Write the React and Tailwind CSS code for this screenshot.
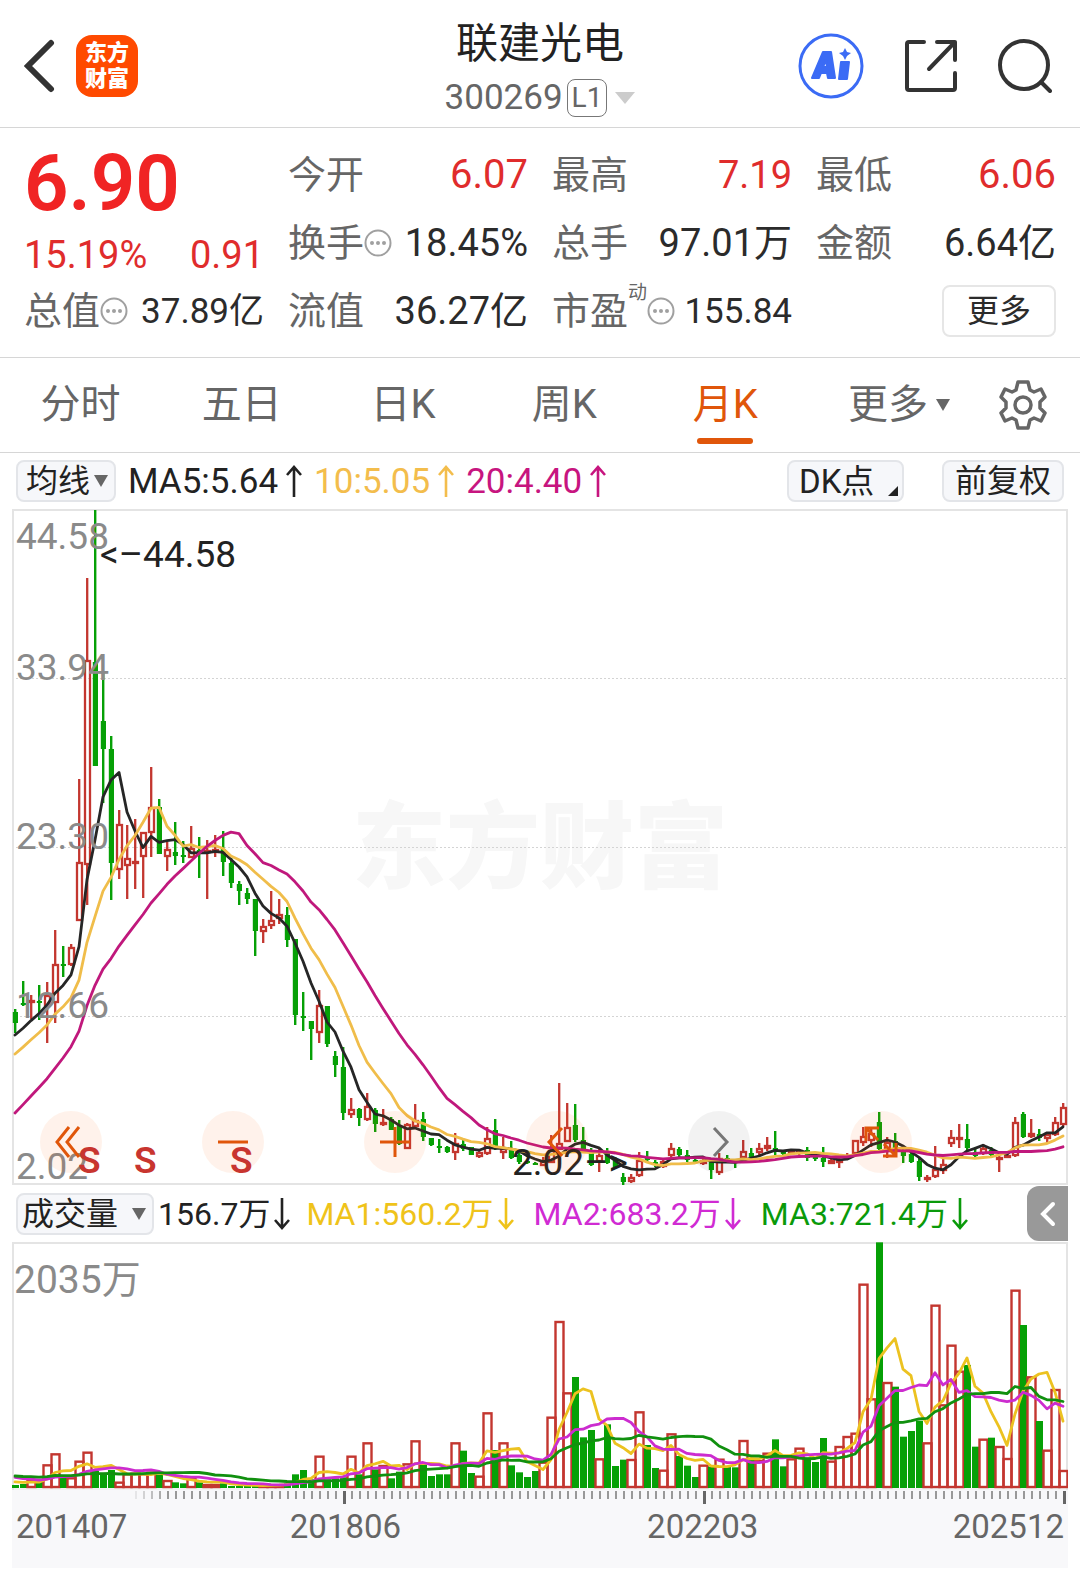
import { useState } from "react";

// one row per month: [direction, high, body top, body bottom, low], all in chart y units
const candles = [
  ["d", 1009, 1012, 1023, 1033], ["d", 981, 1003, 1004, 1006], ["u", 995, 1000, 1003, 1019], ["d", 985, 1001, 1003, 1020],
  ["u", 982, 995, 1006, 1043], ["u", 930, 964, 1003, 1023], ["d", 946, 964, 965, 977], ["u", 944, 947, 965, 966],
  ["u", 779, 862, 921, 921], ["u", 578, 660, 865, 905], ["d", 510, 662, 766, 766], ["d", 672, 721, 749, 803],
  ["d", 736, 749, 863, 900], ["u", 810, 824, 870, 879], ["u", 825, 858, 866, 899], ["u", 819, 861, 863, 889],
  ["u", 832, 832, 857, 898], ["u", 767, 807, 833, 857], ["d", 799, 807, 854, 854], ["u", 842, 849, 857, 871],
  ["d", 822, 852, 856, 865], ["d", 841, 855, 857, 863], ["u", 826, 848, 858, 858], ["d", 837, 850, 853, 878],
  ["u", 840, 850, 853, 899], ["u", 835, 849, 853, 857], ["d", 831, 849, 862, 876], ["d", 858, 863, 883, 888],
  ["d", 881, 884, 891, 905], ["d", 888, 893, 899, 904], ["d", 899, 899, 931, 956], ["u", 919, 926, 932, 943],
  ["u", 891, 920, 926, 929], ["u", 899, 914, 919, 924], ["d", 907, 915, 940, 947], ["d", 939, 939, 1015, 1025],
  ["d", 992, 1016, 1017, 1031], ["d", 1021, 1021, 1029, 1060], ["u", 990, 1005, 1033, 1043], ["d", 1006, 1006, 1044, 1047],
  ["d", 1051, 1056, 1065, 1077], ["d", 1047, 1067, 1113, 1120], ["u", 1098, 1109, 1115, 1118], ["d", 1108, 1109, 1118, 1126],
  ["u", 1093, 1106, 1120, 1121], ["d", 1108, 1110, 1124, 1132], ["u", 1109, 1122, 1125, 1126], ["d", 1117, 1119, 1130, 1130],
  ["d", 1120, 1125, 1144, 1145], ["u", 1123, 1124, 1149, 1149], ["u", 1104, 1120, 1127, 1128], ["d", 1112, 1119, 1137, 1141],
  ["d", 1138, 1138, 1145, 1146], ["d", 1139, 1146, 1147, 1153], ["d", 1146, 1147, 1152, 1153], ["u", 1133, 1143, 1153, 1160],
  ["d", 1140, 1144, 1149, 1151], ["d", 1147, 1147, 1155, 1155], ["u", 1150, 1152, 1157, 1158], ["u", 1127, 1138, 1154, 1155],
  ["d", 1119, 1130, 1148, 1150], ["u", 1137, 1148, 1153, 1159], ["d", 1141, 1150, 1158, 1159], ["d", 1153, 1155, 1162, 1164],
  ["d", 1160, 1161, 1163, 1164], ["d", 1162, 1163, 1164, 1165], ["u", 1157, 1161, 1166, 1166], ["u", 1135, 1150, 1163, 1163],
  ["u", 1083, 1143, 1150, 1150], ["u", 1103, 1127, 1142, 1142], ["d", 1104, 1125, 1140, 1142], ["d", 1127, 1140, 1152, 1153],
  ["d", 1148, 1152, 1165, 1166], ["u", 1148, 1155, 1162, 1172], ["d", 1148, 1153, 1163, 1164], ["d", 1157, 1160, 1167, 1168],
  ["d", 1173, 1177, 1182, 1185], ["u", 1174, 1177, 1182, 1183], ["u", 1152, 1160, 1176, 1177], ["d", 1151, 1158, 1160, 1163],
  ["d", 1160, 1162, 1165, 1167], ["u", 1159, 1161, 1167, 1168], ["u", 1143, 1148, 1156, 1158], ["d", 1147, 1149, 1155, 1157],
  ["d", 1150, 1155, 1160, 1162], ["d", 1158, 1160, 1162, 1163], ["u", 1157, 1160, 1164, 1165], ["d", 1158, 1161, 1170, 1179],
  ["u", 1153, 1158, 1173, 1175], ["d", 1155, 1158, 1161, 1163], ["d", 1159, 1160, 1163, 1168], ["u", 1140, 1151, 1158, 1160],
  ["d", 1148, 1153, 1157, 1158], ["u", 1143, 1148, 1153, 1156], ["u", 1137, 1145, 1149, 1151], ["d", 1131, 1148, 1151, 1155],
  ["d", 1150, 1151, 1154, 1155], ["u", 1150, 1151, 1154, 1155], ["u", 1149, 1150, 1154, 1155], ["d", 1147, 1150, 1158, 1161],
  ["d", 1153, 1155, 1159, 1161], ["d", 1147, 1158, 1162, 1167], ["u", 1159, 1160, 1164, 1164], ["u", 1158, 1160, 1162, 1168],
  ["u", 1153, 1155, 1158, 1159], ["u", 1140, 1140, 1154, 1155], ["u", 1127, 1136, 1143, 1146], ["u", 1127, 1133, 1141, 1147],
  ["d", 1112, 1122, 1149, 1150], ["u", 1137, 1142, 1151, 1158], ["d", 1133, 1141, 1150, 1155], ["d", 1147, 1152, 1156, 1163],
  ["d", 1150, 1154, 1162, 1163], ["d", 1157, 1161, 1177, 1181], ["u", 1175, 1177, 1178, 1182], ["u", 1146, 1169, 1177, 1178],
  ["u", 1157, 1164, 1171, 1174], ["u", 1130, 1137, 1144, 1147], ["u", 1124, 1137, 1139, 1148], ["d", 1124, 1139, 1148, 1150],
  ["d", 1147, 1152, 1156, 1159], ["u", 1144, 1148, 1154, 1155], ["d", 1147, 1150, 1155, 1158], ["u", 1156, 1157, 1158, 1172],
  ["u", 1154, 1155, 1158, 1158], ["u", 1117, 1122, 1156, 1157], ["d", 1112, 1114, 1137, 1138], ["u", 1119, 1133, 1137, 1138],
  ["d", 1129, 1134, 1138, 1141], ["u", 1132, 1134, 1139, 1144], ["u", 1117, 1122, 1135, 1136], ["u", 1103, 1107, 1125, 1126],
];

// 737 = 2035万
const volumes = [
  9, 12, 26, 19, 71, 104, 36, 32, 82, 109, 52, 44, 54, 19, 44, 46, 44, 49, 39, 24,
  17, 14, 32, 17, 12, 12, 14, 6, 6, 6, 9, 9, 9, 9, 14, 41, 54, 26, 97, 26,
  29, 32, 97, 41, 137, 56, 69, 29, 49, 74, 143, 69, 36, 41, 41, 137, 112, 45, 37, 227,
  114, 137, 68, 47, 33, 51, 79, 214, 501, 287, 333, 152, 174, 89, 191, 66, 85, 87, 230, 129,
  60, 55, 164, 96, 67, 33, 70, 64, 88, 64, 62, 144, 84, 84, 106, 146, 65, 89, 121, 92,
  78, 150, 82, 126, 156, 166, 613, 269, 737, 318, 304, 154, 171, 202, 137, 550, 251, 430, 352, 369,
  124, 148, 151, 126, 90, 595, 489, 335, 201, 115, 297, 54,
];

// months before the visible window, only needed for the averages
const history = (a, b, c) => [...Array(10).fill(a), ...Array(5).fill(b), ...Array(4).fill(c)];
const closes = [...history(1172, 1073, 1038), ...candles.map(([dir, , top, bottom]) => (dir === "u" ? top : bottom))];
const volumeSeries = [...history(40, 45, 21), ...volumes];

const RED = "#c3362f";
const GREEN = "#06a006";
const xOf = (i) => 15 + i * 8;

const average = (series, n) =>
  candles.map((_, i) => {
    const end = i + 20;
    return series.slice(end - n, end).reduce((a, b) => a + b, 0) / n;
  });

const toPoints = (ys) => ys.map((y, i) => `${xOf(i)},${y.toFixed(1)}`).join(" ");
const priceLine = (n) => toPoints(average(closes, n));
const volumeLine = (n) => toPoints(average(volumeSeries, n).map((v) => 1488 - v / 3));

const Caret = ({ className }) => (
  <svg viewBox="0 0 14 12" preserveAspectRatio="none" className={className} fill="currentColor" aria-hidden="true">
    <path d="M0 0h14L7 12z" />
  </svg>
);

const Arrow = ({ down }) => (
  <svg viewBox="0 0 16 32" className="h-8 w-4 shrink-0" fill="none" stroke="currentColor" strokeWidth="2.6" aria-hidden="true">
    {down ? <path d="M8 0v30M1 22l7 8 7-8" /> : <path d="M8 32V2M1 10l7-8 7 8" />}
  </svg>
);

const InfoDot = ({ label }) => (
  <button aria-label={label} className="shrink-0 text-[#a0a0a0]">
    <svg viewBox="0 0 28 28" className="block size-7" fill="none" stroke="currentColor" strokeWidth="2">
      <circle cx="14" cy="14" r="12.5" />
      <g fill="currentColor" stroke="none">
        <circle cx="8" cy="14" r="2" />
        <circle cx="14" cy="14" r="2" />
        <circle cx="20" cy="14" r="2" />
      </g>
    </svg>
  </button>
);

const Header = () => (
  <header className="grid h-32 grid-cols-[1fr_auto_1fr] items-center border-b border-[#d6d6d6] px-6 pt-1">
    <div className="flex items-center gap-5">
      <button aria-label="返回" className="text-[#333]">
        <svg viewBox="0 0 32 54" className="h-[54px] w-8" fill="none" stroke="currentColor" strokeWidth="6" strokeLinecap="round">
          <path d="M27 4L4 27l23 23" />
        </svg>
      </button>
      <div className="flex size-[62px] flex-col items-center justify-center rounded-2xl bg-[#ff4a00] text-[22px] leading-[26px] font-black text-white">
        <span>东方</span>
        <span>财富</span>
      </div>
    </div>

    <div className="flex flex-col items-center gap-1 pt-2">
      <h1 className="text-[42px] leading-[52px] text-[#222]">联建光电</h1>
      <button className="flex items-center gap-1 text-[35px] leading-[48px] text-[#666]">
        300269
        <span className="rounded-lg border border-[#777] px-1 text-[28px] leading-9">L1</span>
        <Caret className="ml-1 h-3 w-5 text-[#ccc]" />
      </button>
    </div>

    <div className="flex items-center justify-end gap-10 pr-1 text-[#333]">
      <button aria-label="Ai" className="text-[#3b6bf5]">
        <svg viewBox="0 0 66 66" className="size-[66px]">
          <circle cx="33" cy="33" r="31" fill="none" stroke="currentColor" strokeWidth="3" />
          <g fill="currentColor" stroke="currentColor" strokeWidth="2" strokeLinejoin="round">
            <path fillRule="evenodd" d="M14 45L25 19h8l4 26h-7l-1-5h-6l-2 5zM25 34h4l-1-7z" />
            <path d="M43 29h8l-2 17h-8z" />
            <path strokeWidth="0" d="M47 15l2 4 4 1-4 3-2 4-2-4-4-3 4-1z" />
          </g>
        </svg>
      </button>
      <button aria-label="分享">
        <svg viewBox="0 0 54 54" className="size-[54px]" fill="none" stroke="currentColor" strokeWidth="4" strokeLinecap="round" strokeLinejoin="round">
          <path d="M20 3H5q-2 0-2 2v44q0 2 2 2h44q2 0 2-2V34M33 3h18v18M51 3L25 30" />
        </svg>
      </button>
      <button aria-label="搜索">
        <svg viewBox="0 0 54 54" className="size-[54px]" fill="none" stroke="currentColor" strokeWidth="4" strokeLinecap="round">
          <circle cx="26" cy="26" r="24" />
          <path d="M43 43l9 9" />
        </svg>
      </button>
    </div>
  </header>
);

const Stat = ({ label, value, info, sup, color = "text-[#2b2b2b]", size = "text-[38px]" }) => (
  <div className="flex h-[68px] items-center">
    <dt className="flex shrink-0 items-center text-[38px] text-[#666]">
      {label}
      {sup && <span className="mb-9 text-[19px] leading-5">{sup}</span>}
      {info && <InfoDot label={`${label}说明`} />}
    </dt>
    <dd className={`flex-1 text-right whitespace-nowrap ${size} ${color}`}>{value}</dd>
  </div>
);

const Quote = () => (
  <section className="grid grid-cols-4 gap-x-6 border-b border-[#d6d6d6] px-6 pt-[13px] pb-3 leading-none">
    <div>
      <div className="flex h-[136px] flex-col justify-between pt-1">
        <div className="text-[78px] leading-[78px] font-semibold text-[#f02424]">6.90</div>
        <div className="flex items-center justify-between text-[38px] leading-[44px] text-[#e02c2c]">
          <span>15.19%</span>
          <span>0.91</span>
        </div>
      </div>
      <dl>
        <Stat label="总值" value="37.89亿" info size="text-[35px]" />
      </dl>
    </div>
    <dl>
      <Stat label="今开" value="6.07" color="text-[#e02c2c]" size="text-[40px]" />
      <Stat label="换手" value="18.45%" info />
      <Stat label="流值" value="36.27亿" />
    </dl>
    <dl>
      <Stat label="最高" value="7.19" color="text-[#e02c2c]" />
      <Stat label="总手" value="97.01万" />
      <Stat label="市盈" value="155.84" sup="动" info size="text-[35px]" />
    </dl>
    <div>
      <dl>
        <Stat label="最低" value="6.06" color="text-[#e02c2c]" size="text-[40px]" />
        <Stat label="金额" value="6.64亿" />
      </dl>
      <div className="flex h-[68px] items-center justify-end">
        <button className="h-[52px] w-[114px] rounded-lg border-2 border-[#e6e6e6] text-[32px] text-[#2b2b2b]">更多</button>
      </div>
    </div>
  </section>
);

const Tabs = () => {
  const [active, setActive] = useState("月K");
  return (
    <nav className="flex h-[95px] border-b border-[#d6d6d6] pr-[26px] text-[40px] text-[#666]">
      {["分时", "五日", "日K", "周K", "月K"].map((tab) => (
        <button
          key={tab}
          onClick={() => setActive(tab)}
          className={`relative flex-1 ${tab === active ? "text-[#e0560a]" : ""}`}
        >
          {tab}
          {tab === active && <span className="absolute bottom-2 left-1/2 h-[6px] w-14 -translate-x-1/2 rounded-full bg-[#e0560a]" />}
        </button>
      ))}
      <button className="flex w-[186px] items-center justify-center gap-2">
        更多
        <Caret className="h-3 w-[14px]" />
      </button>
      <button aria-label="设置" className="flex w-[62px] items-center justify-center">
        <svg viewBox="0 0 48 50" className="h-[50px] w-12" fill="none" stroke="currentColor" strokeWidth="3.5" strokeLinejoin="round">
          <path d="M19 2h10l2 8 4 2 7-3 4 8-5 5v6l5 5-4 8-7-3-4 2-2 8H19l-2-8-4-2-7 3-4-8 5-5v-6l-5-5 4-8 7 3 4-2z" />
          <circle cx="24" cy="25" r="8" />
        </svg>
      </button>
    </nav>
  );
};

const Picker = ({ label, options, className }) => (
  <div className="relative flex items-center text-[#222]">
    <select
      aria-label={label}
      className={`h-[42px] appearance-none rounded-lg border-2 border-[#e3e5e9] bg-[#f6f7fa] text-[32px] leading-[38px] ${className}`}
    >
      {options.map((o) => (
        <option key={o}>{o}</option>
      ))}
    </select>
    <Caret className="pointer-events-none absolute right-2 h-3 w-[14px] text-[#666]" />
  </div>
);

const PriceBar = () => (
  <div className="flex h-14 items-center gap-2 px-4 text-[35px] leading-none">
    <Picker label="主图指标" options={["均线", "BOLL"]} className="w-[100px] pl-2" />
    <span className="ml-1 flex items-center gap-2 text-[#222]">MA5:5.64<Arrow /></span>
    <span className="ml-1 flex items-center gap-2 text-[#f3bd4c]">10:5.05<Arrow /></span>
    <span className="ml-1 flex items-center gap-2 text-[#c7157f]">20:4.40<Arrow /></span>
    <button className="ml-auto flex h-[42px] w-[117px] items-center justify-between rounded-lg border-2 border-[#e3e5e9] bg-[#f6f7fa] pr-1 pl-2.5 text-[33px] text-[#222]">
      DK点
      <svg viewBox="0 0 10 10" className="mt-5 size-[10px]" fill="currentColor" aria-hidden="true">
        <path d="M10 0v10H0z" />
      </svg>
    </button>
    <button className="ml-[30px] h-[42px] w-[122px] rounded-lg border-2 border-[#e3e5e9] bg-[#f6f7fa] text-[32px] text-[#222]">前复权</button>
  </div>
);

const tools = [
  { label: "最早", d: "M29 16L17 31l12 15M39 16L27 31l12 15" },
  { label: "缩小", d: "M16 31h30" },
  { label: "放大", d: "M16 31h30M31 16v30" },
  { label: "向前", d: "M36 17L23 31l13 14" },
  { label: "向后", d: "M26 17l13 14-13 14", muted: true },
  { label: "全屏", d: "M16 30V17h13M17 18l11 11M46 32v13H33M45 44L34 33" },
];

const PriceChart = () => (
  <div className="relative mx-3 text-[37px] leading-[44px]">
    <div className="absolute inset-0 flex items-center justify-center pt-1 text-[94px] font-black text-[#f7f7f7]" aria-hidden="true">东方财富</div>
    <svg viewBox="12 509 1056 676" className="relative block w-full" fill="none">
      <g stroke="#d4d4d4" strokeDasharray="2 2">
        <path d="M12 678.5h1056M12 847.5h1056M12 1016.5h1056" />
      </g>
      <rect x="13" y="510" width="1054" height="674" stroke="#e4e4e4" strokeWidth="2" />
      {candles.map(([dir, high, top, bottom, low], i) => {
        const x = xOf(i);
        if (dir === "d") {
          return (
            <g key={i} fill={GREEN}>
              <rect x={x - 1} y={high} width="2.4" height={low - high} />
              <rect x={x - 2.2} y={top} width="5.2" height={Math.max(bottom - top, 2)} />
            </g>
          );
        }
        return (
          <g key={i} stroke={RED} strokeWidth="2.3">
            <path d={`M${x + 0.2} ${high}V${top}M${x + 0.2} ${bottom}V${low}`} />
            <rect x={x - 2} y={top + 1} width="5" height={Math.max(bottom - top - 2, 1)} />
          </g>
        );
      })}
      <g strokeWidth="2.8" strokeLinejoin="round" strokeLinecap="round">
        <polyline points={priceLine(5)} stroke="#262626" />
        <polyline points={priceLine(10)} stroke="#f0bd4a" />
        <polyline points={priceLine(20)} stroke="#c0187c" />
      </g>
    </svg>

    <div className="absolute inset-x-1 top-1.5 text-[#8a8a8a]">44.58</div>
    <div className="absolute inset-x-1 top-1/4 -translate-y-8 text-[#8a8a8a]">33.94</div>
    <div className="absolute inset-x-1 top-1/2 -translate-y-8 text-[#8a8a8a]">23.30</div>
    <div className="absolute inset-x-1 top-3/4 -translate-y-8 text-[#8a8a8a]">12.66</div>
    <div className="absolute inset-x-1 -bottom-1 text-[#8a8a8a]">2.02</div>
    <div className="absolute top-6 left-[88px] flex text-[#222]">&lt;–<span>44.58</span></div>
    <div className="absolute bottom-0 left-[500px] text-[#222]">2.02–&gt;</div>

    <div className="absolute bottom-3 left-7 flex gap-[100px]">
      {tools.map((t) => (
        <button
          key={t.label}
          aria-label={t.label}
          className={`size-[62px] rounded-full ${t.muted ? "bg-black/5 text-[#777]" : "bg-[#ff5a00]/8 text-[#e0560a]"}`}
        >
          <svg viewBox="0 0 62 62" fill="none" stroke="currentColor" strokeWidth="3">
            <path d={t.d} />
          </svg>
        </button>
      ))}
    </div>
    <span className="absolute bottom-0.5 left-[66px] font-semibold text-[#c8352f]">S</span>
    <span className="absolute bottom-0.5 left-[122px] font-semibold text-[#c8352f]">S</span>
    <span className="absolute bottom-0.5 left-[218px] font-semibold text-[#c8352f]">S</span>
  </div>
);

const VolumeBar = () => (
  <div className="flex h-[57px] items-center pr-3 pl-4 text-[32px] leading-none whitespace-nowrap">
    <Picker label="副图指标" options={["成交量", "MACD", "KDJ"]} className="w-[138px] pl-1" />
    <span className="ml-1 flex items-center gap-1 text-[#222]">156.7万<Arrow down /></span>
    <span className="ml-4 flex items-center gap-1 text-[#efc31a]">MA1:560.2万<Arrow down /></span>
    <span className="ml-5 flex items-center gap-1 text-[#d02bd3]">MA2:683.2万<Arrow down /></span>
    <span className="ml-5 flex items-center gap-1 text-[#0a9a0a]">MA3:721.4万<Arrow down /></span>
    <button aria-label="展开" className="ml-auto flex h-[55px] w-[41px] items-center justify-center rounded-l-xl bg-[#999] text-white">
      <svg viewBox="0 0 16 26" className="h-[26px] w-4" fill="none" stroke="currentColor" strokeWidth="4" strokeLinecap="round">
        <path d="M13 3L3 13l10 10" />
      </svg>
    </button>
  </div>
);

const VolumeChart = () => (
  <div className="relative mx-3">
    <svg viewBox="12 1242 1056 248" className="block w-full" fill="none">
      <path d="M13 1490V1243H1067V1490" stroke="#e4e4e4" strokeWidth="2" />
      <path d="M12 1489H1068" stroke="#e4e4e4" strokeWidth="1" />
      {volumes.map((v, i) => {
        const h = v / 3;
        const x = xOf(i);
        return candles[i][0] === "d" ? (
          <rect key={i} x={x - 3} y={1488 - h} width="7" height={h} fill={GREEN} />
        ) : (
          <rect key={i} x={x - 3.5} y={1489 - h} width="8" height={Math.max(h - 2, 1)} stroke={RED} strokeWidth="2.4" />
        );
      })}
      <g strokeWidth="2.8" strokeLinejoin="round" strokeLinecap="round">
        <polyline points={volumeLine(5)} stroke="#ecc220" />
        <polyline points={volumeLine(10)} stroke="#cc2ccf" />
        <polyline points={volumeLine(20)} stroke="#11900f" />
      </g>
    </svg>
    <div className="absolute top-4 left-[2px] text-[39px] leading-[44px] text-[#8a8a8a]">2035万</div>
  </div>
);

const TimeAxis = () => (
  <div className="mx-3 bg-[#f8f8fa] pb-5">
    <svg viewBox="12 1490 1056 16" className="block w-full" aria-hidden="true">
      {candles.map((_, i) => {
        if (i < 15) return null;
        const major = i === 41 || i === 86 || i === 131;
        return (
          <rect
            key={i}
            x={xOf(i)}
            y="1491"
            width={major ? 3 : 2}
            height={major ? 13 : 8}
            fill={major ? "#666" : "#999"}
            opacity={Math.min(1, (i - 14) / 5)}
          />
        );
      })}
    </svg>
    <div className="grid grid-cols-[148fr_368fr_352fr_188fr] px-1 text-[33px] leading-[42px] text-[#666]">
      <span>201407</span>
      <span className="text-center">201806</span>
      <span className="text-center">202203</span>
      <span className="text-right">202512</span>
    </div>
  </div>
);

export default function App() {
  return (
    <main className="min-h-screen bg-white font-[Roboto,'Noto_Sans_CJK_SC',sans-serif]">
      <Header />
      <Quote />
      <Tabs />
      <PriceBar />
      <PriceChart />
      <VolumeBar />
      <VolumeChart />
      <TimeAxis />
    </main>
  );
}
